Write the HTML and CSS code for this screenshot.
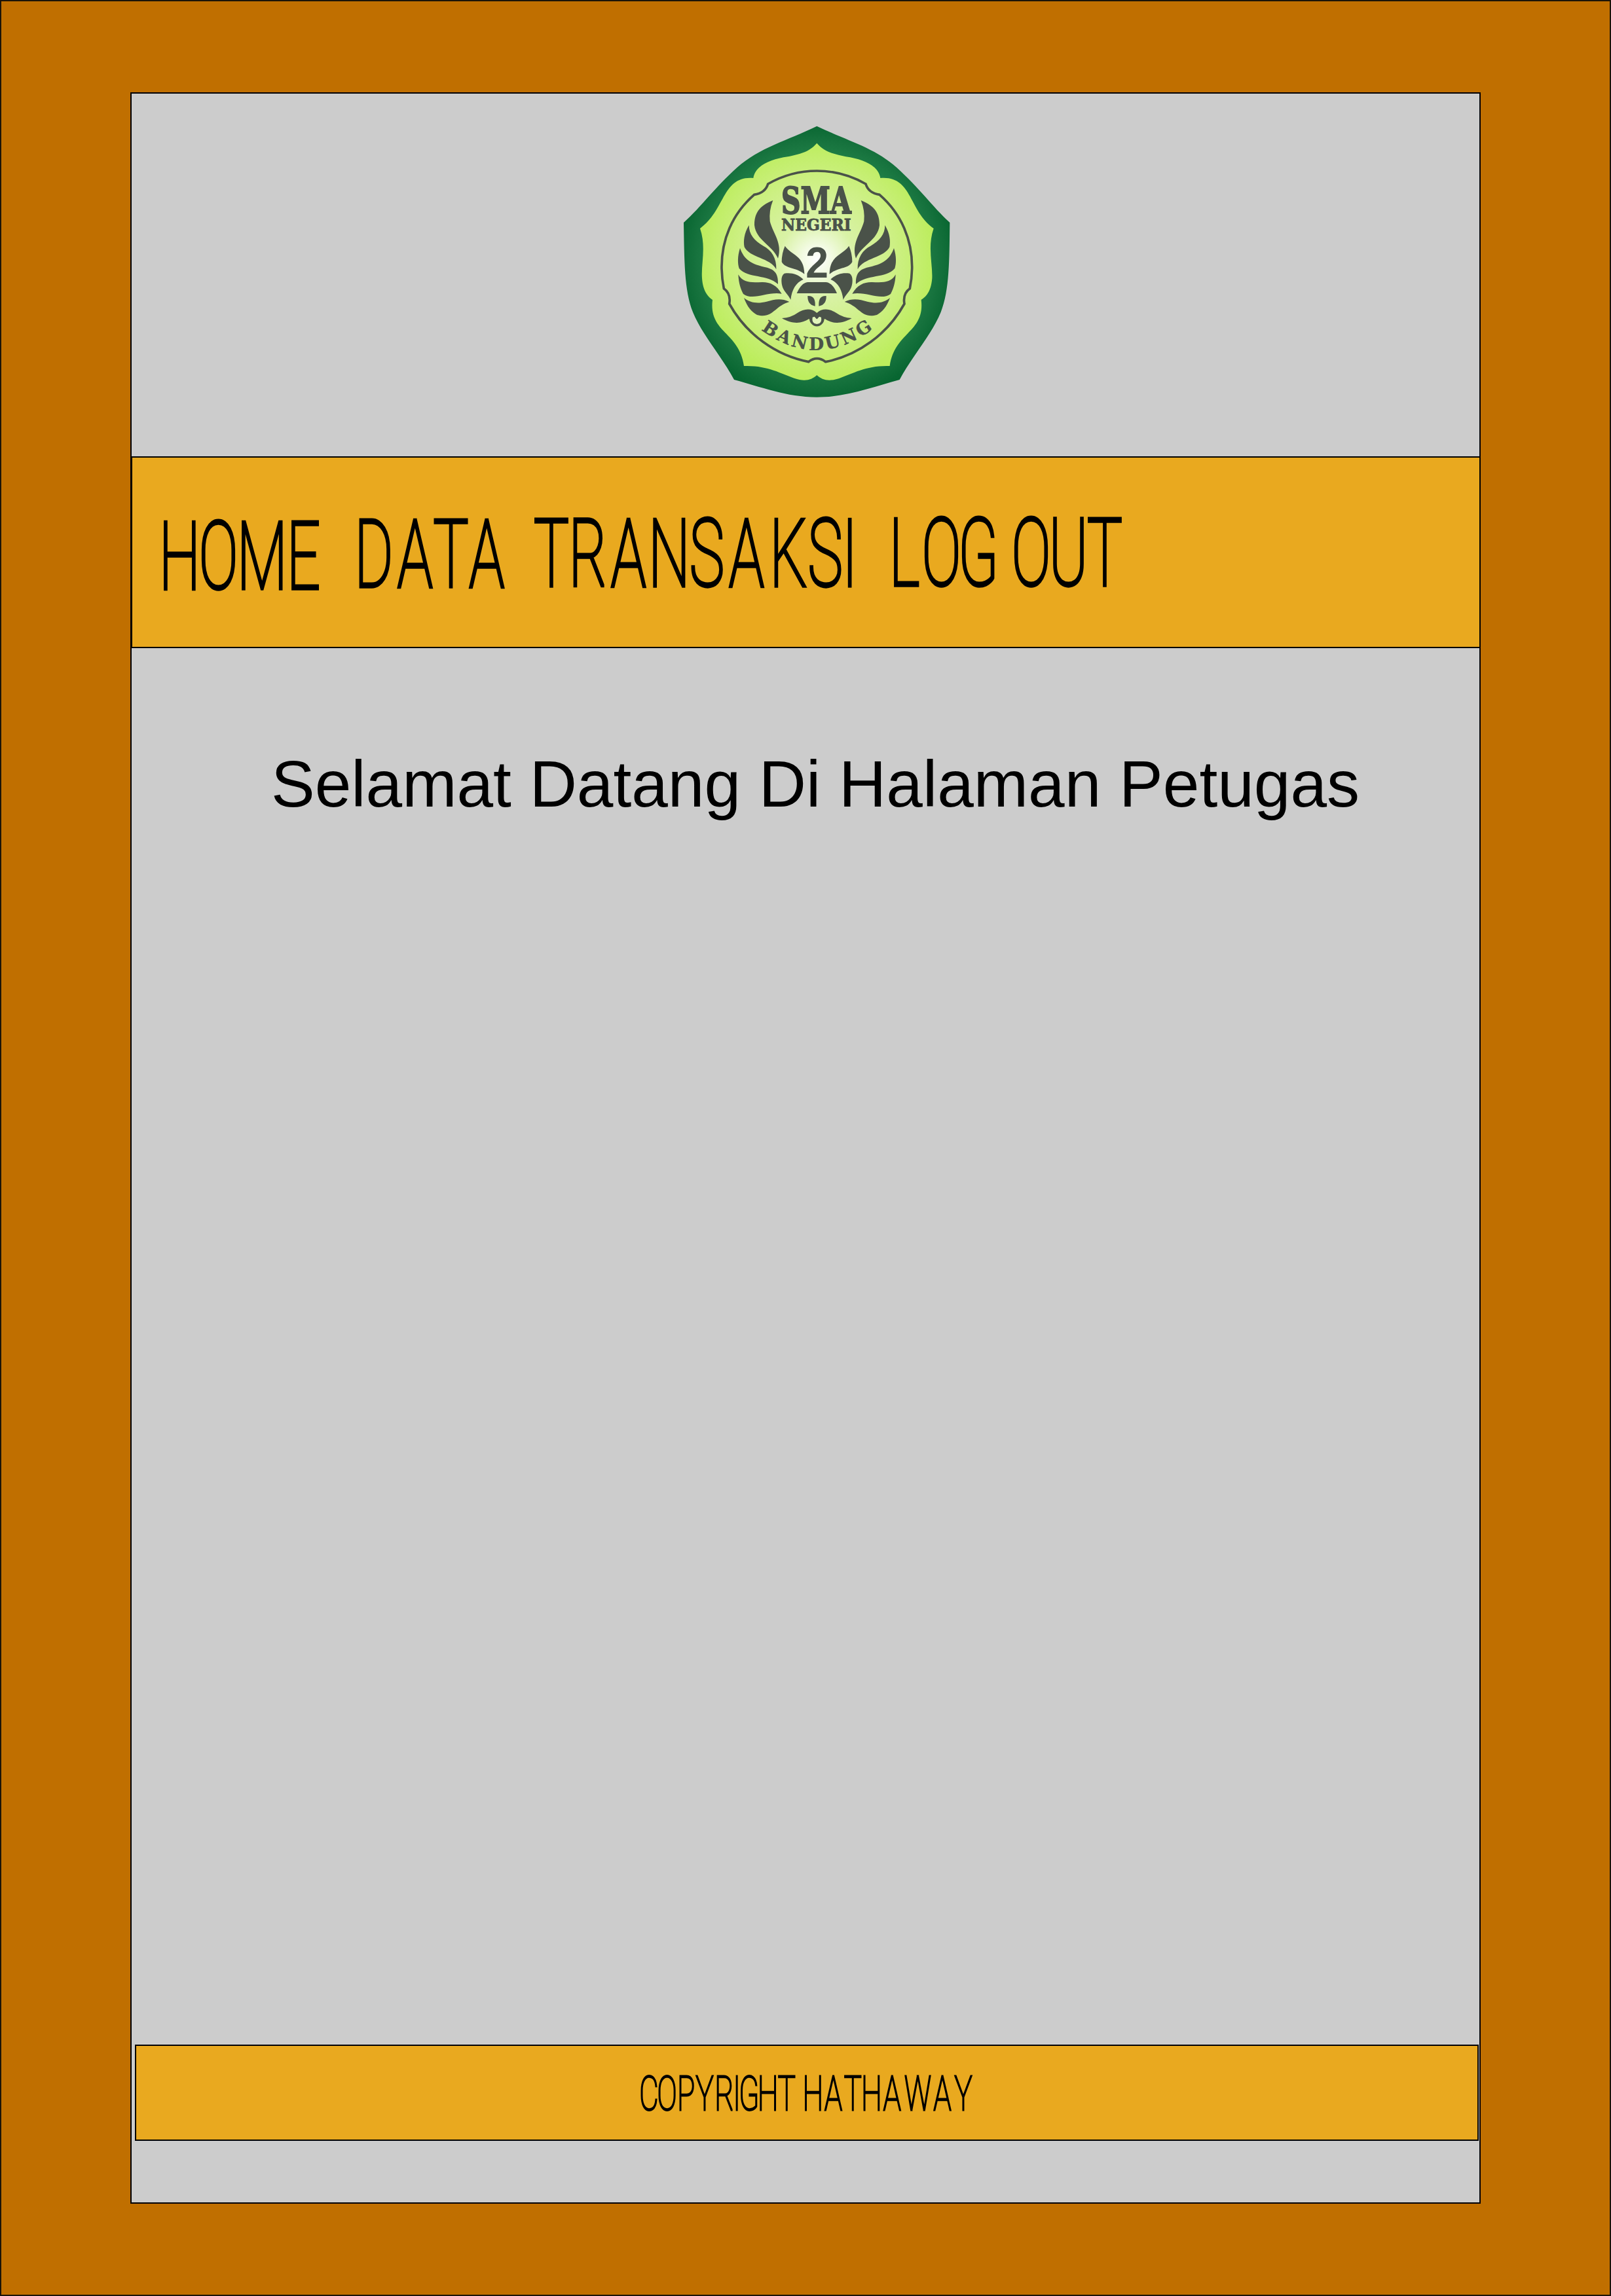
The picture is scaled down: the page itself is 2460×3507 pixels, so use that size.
FILE: index.html
```html
<!DOCTYPE html>
<html lang="id">
<head>
<meta charset="utf-8">
<title>Halaman Petugas</title>
<link rel="stylesheet" href="styles.css">
</head>
<body>
<div class="page">
  <header class="header">
    <svg class="logo" viewBox="0 0 1320 1320" role="img" aria-label="SMA Negeri 2 Bandung">
      <defs>
        <radialGradient id="rim" gradientUnits="userSpaceOnUse" cx="652" cy="660" r="640">
          <stop offset=".7" stop-color="#23854a"/><stop offset=".86" stop-color="#17733e"/><stop offset="1" stop-color="#086631"/>
        </radialGradient>
        <radialGradient id="field" gradientUnits="userSpaceOnUse" cx="652" cy="650" r="550">
          <stop offset="0" stop-color="#fff"/><stop offset=".12" stop-color="#f3fbe4"/><stop offset=".32" stop-color="#d9f2a6"/><stop offset=".65" stop-color="#cdf084"/><stop offset="1" stop-color="#bced5c"/>
        </radialGradient>
        <path id="arc" d="M390 966Q652 1164 916 962"/>
        <g id="wing">
          <path d="M451 378C385 404 366 440 366 492C374 562 447 582 474 644C496 574 451 530 437 474Q432 425 451 378Z"/>
          <path d="M341 492C318 530 315 566 320 592C342 640 440 642 466 694C468 640 443 606 407 587C365 562 341 534 341 492Z"/>
          <path d="M300 597C288 636 289 668 296 690C337 737 426 716 474 762C476 713 458 696 424 686C350 671 319 650 300 597Z"/>
          <path d="M292 718C294 758 303 785 315 807C360 840 423 795 491 806C467 765 436 752 400 753C350 755 315 757 292 718Z"/>
          <path d="M318 825C333 866 352 888 378 903C450 922 458 862 526 843C488 824 456 832 422 842C378 853 345 847 318 825Z"/>
          <path d="M506 587C535 630 594 628 595 716C558 684 508 693 491 660Q491 620 506 587Z"/>
          <path d="M590 740C565 716 535 708 503 713Q490 722 490 745C490 793 519 804 532 834C538 785 556 756 590 740Z"/>
          <path d="M610 816C642 815 645 838 644 863C618 858 609 840 610 816Z"/>
        </g>
      </defs>
      <path fill="url(#rim)" d="M652 38C790 105 915 135 1018 228C1120 320 1180 405 1261 480C1259 650 1260 790 1220 890C1180 990 1090 1090 1031 1200C910 1232 790 1280 652 1280C514 1280 394 1232 273 1200C214 1090 124 990 84 890C44 790 45 650 42 480C125 405 184 320 286 228C390 135 515 105 652 38Z"/>
      <path fill="url(#field)" d="M652 116C690 160 735 166 785 178C865 190 934 218 943 276C1090 264 1070 422 1187 507C1158 590 1183 670 1180 735C1175 800 1150 820 1130 834C1148 985 1008 980 986 1137C882 1133 820 1170 756 1193C708 1210 677 1202 652 1179C627 1202 596 1210 548 1193C484 1170 422 1133 318 1137C296 980 156 985 174 834C154 820 130 795 126 735C121 670 146 590 117 507C234 422 218 264 361 276C370 218 439 190 519 178C569 166 614 160 652 116Z"/>
      <path class="ring" d="M652 243Q772 243 876 303Q888 344 939 352C1040 440 1090 560 1088 690Q1087 738 1078 782Q1045 805 1053 852C975 993 840 1089 692 1118Q652 1088 614 1118C465 1089 329 993 251 852Q259 805 226 782Q217 738 216 690C214 560 264 440 365 352Q416 344 428 303Q532 243 652 243Z"/>
      <g class="ink">
        <use href="#wing"/>
        <use href="#wing" transform="translate(1305 0) scale(-1 1)"/>
        <path d="M560 804Q581 756 610 753H694Q724 756 744 804Z"/>
        <path d="M652 894C626 869 590 876 563 894Q535 915 492 918C538 947 585 943 615 922H690C720 943 765 947 812 918Q770 915 741 894C714 876 678 869 652 894Z"/>
        <text class="sma" x="649" y="437" textLength="320" lengthAdjust="spacingAndGlyphs">SMA</text>
        <text class="negeri" x="649" y="515" textLength="320" lengthAdjust="spacingAndGlyphs">NEGERI</text>
        <text class="number" x="653" y="731" textLength="104" lengthAdjust="spacingAndGlyphs">2</text>
        <text class="bandung"><textPath href="#arc" startOffset="50%" textLength="556">BANDUNG</textPath></text>
      </g>
      <path class="mouth" d="M627 917A25 29 0 1 0 677 917"/>
      <path fill="#e1f5bb" d="M632 914L641 911L652 923L663 911L672 914Q677 943 652 945Q627 943 632 914Z"/>
    </svg>
  </header>
  <nav class="nav">
    <svg class="label home" viewBox="0 0 372 105" preserveAspectRatio="none"><text y="103" x="35.6 129.4 235.8 336">HOME</text></svg>
    <svg class="label data" viewBox="0 0 352 105" preserveAspectRatio="none"><text y="103" x="34.5 134.4 221.3 308">DATA</text></svg>
    <svg class="label transaksi" viewBox="0 0 769 105" preserveAspectRatio="none"><text y="103" x="39.7 128.5 226.6 325.7 417 513 614.5 704 763.5">TRANSAKSI</text></svg>
    <svg class="label logout" viewBox="0 0 553 105" preserveAspectRatio="none"><text y="103" x="27 116.9 206.5 270 334.7 425.2 513.4">LOG OUT</text></svg>
  </nav>
  <main class="content">
    <h1 class="title">Selamat Datang Di Halaman Petugas</h1>
  </main>
  <footer class="footer">
    <svg class="label copyright" viewBox="0 0 805 53" preserveAspectRatio="none"><text y="52" x="18.8 62.9 109 154.3 202 232.6 262 308.2 353.6 386.3 417.5 466.8 514.4 560 609.7 672 732 782.8">COPYRIGHT HATHAWAY</text></svg>
  </footer>
</div>
</body>
</html>
```
FILE: styles.css
```css
* { box-sizing: border-box; }
body {
  margin: 0;
  width: 2460px;
  height: 3507px;
  padding: 139px 197px;
  background: #c06f00;
  border: 2px solid #1c1408;
  font-family: "Liberation Sans", Arial, sans-serif;
  color: #000;
}
.page {
  width: 2062px;
  height: 3225px;
  display: flex;
  flex-direction: column;
  background: #ccc;
  border: 2px solid #000;
}
.header {
  height: 554px;
  flex: none;
  padding: 37px 0 0 829px;
}
.logo { display: block; width: 440px; height: 440px; }
.ring { fill: none; stroke: #4a5249; stroke-width: 11; }
.ink { fill: #4a5249; }
.mouth { fill: none; stroke: #4a5249; stroke-width: 19; }
.sma, .negeri, .bandung {
  font-family: "DejaVu Serif", serif;
  font-weight: 700;
  text-anchor: middle;
  stroke: #4a5249;
}
.sma { font-size: 170px; stroke-width: 6; }
.negeri { font-size: 74px; stroke-width: 2.5; }
.bandung { font-size: 80px; stroke-width: 1; }
.number {
  font-family: "Liberation Sans", sans-serif;
  font-weight: 700;
  font-size: 200px;
  text-anchor: middle;
}
.nav {
  flex: none;
  display: flex;
  align-items: flex-start;
  height: 293px;
  margin-left: -1px;
  padding: 91px 0 0 50px;
  background: #e9a91f;
  border: 2px solid #000;
  border-right: 0;
}
.label {
  display: block;
  flex: none;
  overflow: visible;
  height: 105px;
}
.label text {
  font-family: Roboto, sans-serif;
  font-weight: 100;
  font-size: 142px;
  text-anchor: middle;
  fill: #000;
  stroke: #000;
  stroke-width: 4.4px;
  vector-effect: non-scaling-stroke;
}
.home { width: 234px; margin-top: 6px; }
.data { width: 222px; margin: 3px 0 0 63px; }
.transaksi { width: 484px; margin: 2px 0 0 46px; }
.logout { width: 348px; margin: 1px 0 0 63px; }
.content {
  flex: 1;
  padding: 149px 0 0 213px;
}
.title {
  margin: 0;
  font-size: 100px;
  line-height: 116px;
  font-weight: 400;
  white-space: nowrap;
}
.footer {
  flex: none;
  display: flex;
  height: 147px;
  margin: 0 1px 94px 5px;
  padding: 46px 0 0 771px;
  background: #e9a91f;
  border: 2px solid #000;
}
.copyright { width: 506px; height: 53px; }
.label.copyright text { font-size: 72px; stroke-width: 2.4px; }
```
